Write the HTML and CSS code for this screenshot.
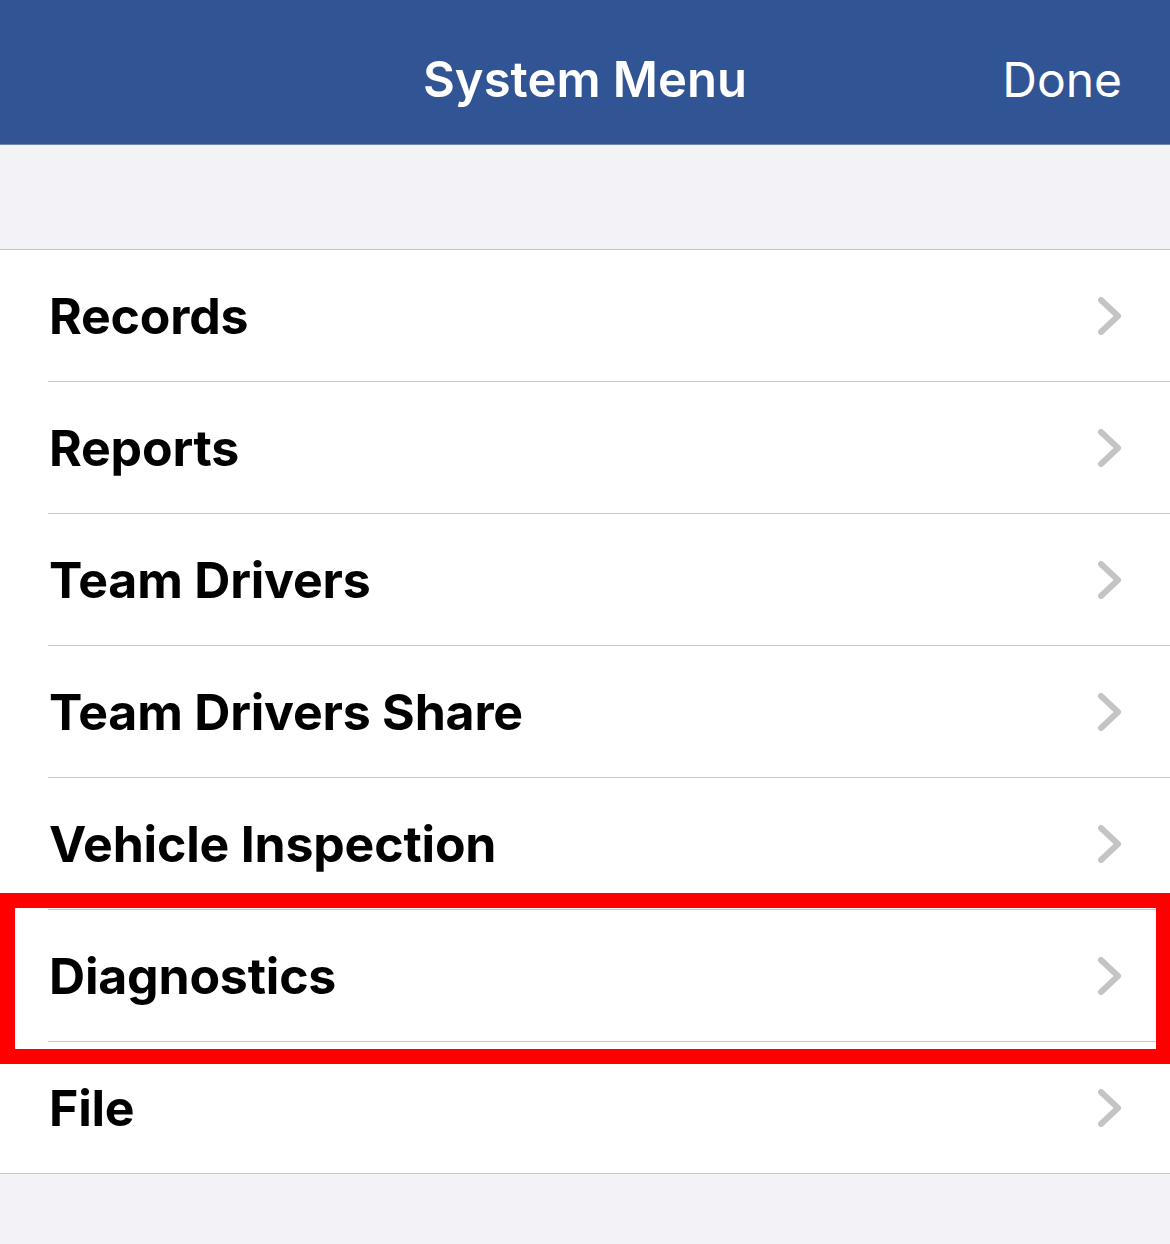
FILE: index.html
```html
<!DOCTYPE html>
<html>
<head>
<meta charset="utf-8">
<link rel="stylesheet" href="styles.css">
</head>
<body>
<div class="screen">
  <header class="navbar">
    <div class="nav-side"></div>
    <div class="nav-title">System Menu</div>
    <div class="nav-side nav-done">Done</div>
  </header>
  <div class="spacer"></div>
  <ul class="list">
    <li class="row"><span class="label">Records</span><svg class="chev" viewBox="0 0 24 38"><path d="M3 3 L20 19 L3 35"/></svg></li>
    <li class="row"><span class="label">Reports</span><svg class="chev" viewBox="0 0 24 38"><path d="M3 3 L20 19 L3 35"/></svg></li>
    <li class="row"><span class="label">Team Drivers</span><svg class="chev" viewBox="0 0 24 38"><path d="M3 3 L20 19 L3 35"/></svg></li>
    <li class="row"><span class="label">Team Drivers Share</span><svg class="chev" viewBox="0 0 24 38"><path d="M3 3 L20 19 L3 35"/></svg></li>
    <li class="row"><span class="label">Vehicle Inspection</span><svg class="chev" viewBox="0 0 24 38"><path d="M3 3 L20 19 L3 35"/></svg></li>
    <li class="row"><span class="label">Diagnostics</span><svg class="chev" viewBox="0 0 24 38"><path d="M3 3 L20 19 L3 35"/></svg></li>
    <li class="row"><span class="label">File</span><svg class="chev" viewBox="0 0 24 38"><path d="M3 3 L20 19 L3 35"/></svg></li>
  </ul>
  <div class="highlight"></div>
</div>
</body>
</html>
```
FILE: styles.css
```css
html, body {
  margin: 0;
  padding: 0;
  background: #f2f2f7;
}
.screen {
  position: relative;
  width: 1170px;
  height: 1244px;
  background: #f2f2f7;
  font-family: "Inter", "Liberation Sans", sans-serif;
  overflow: hidden;
}
.navbar {
  height: 145px;
  background: #315494;
  display: flex;
  align-items: center;
  color: #fff;
  box-sizing: border-box;
  padding: 0 48px 0 48px;
  border-bottom: 1px solid #6f85b0;
}
.nav-side {
  flex: 1;
}
.nav-title {
  font-size: 49px;
  font-weight: 600;
  letter-spacing: 0;
  padding-top: 14px;
}
.nav-done {
  text-align: right;
  font-size: 48px;
  font-weight: 400;
  padding-top: 14px;
}
.spacer {
  height: 104px;
}
.list {
  list-style: none;
  margin: 0;
  padding: 0;
  background: #fff;
  border-top: 1px solid #c8c7cc;
  border-bottom: 1px solid #c8c7cc;
}
.row {
  height: 131px;
  margin-left: 48px;
  padding-right: 48px;
  display: flex;
  align-items: center;
  justify-content: space-between;
  border-bottom: 1px solid #c8c7cc;
}
.row:last-child {
  border-bottom: none;
}
.label {
  font-size: 50px;
  font-weight: 700;
  color: #000;
  margin-left: 1px;
  letter-spacing: -0.2px;
}
.chev {
  width: 24px;
  height: 38px;
  fill: none;
  stroke: #c4c4c7;
  stroke-width: 6;
  stroke-linecap: round;
  stroke-linejoin: round;
}
.highlight {
  position: absolute;
  left: 0;
  top: 893px;
  width: 1170px;
  height: 171px;
  box-sizing: border-box;
  border: 15px solid #ff0000;
  border-right-width: 14px;
  pointer-events: none;
}
```
